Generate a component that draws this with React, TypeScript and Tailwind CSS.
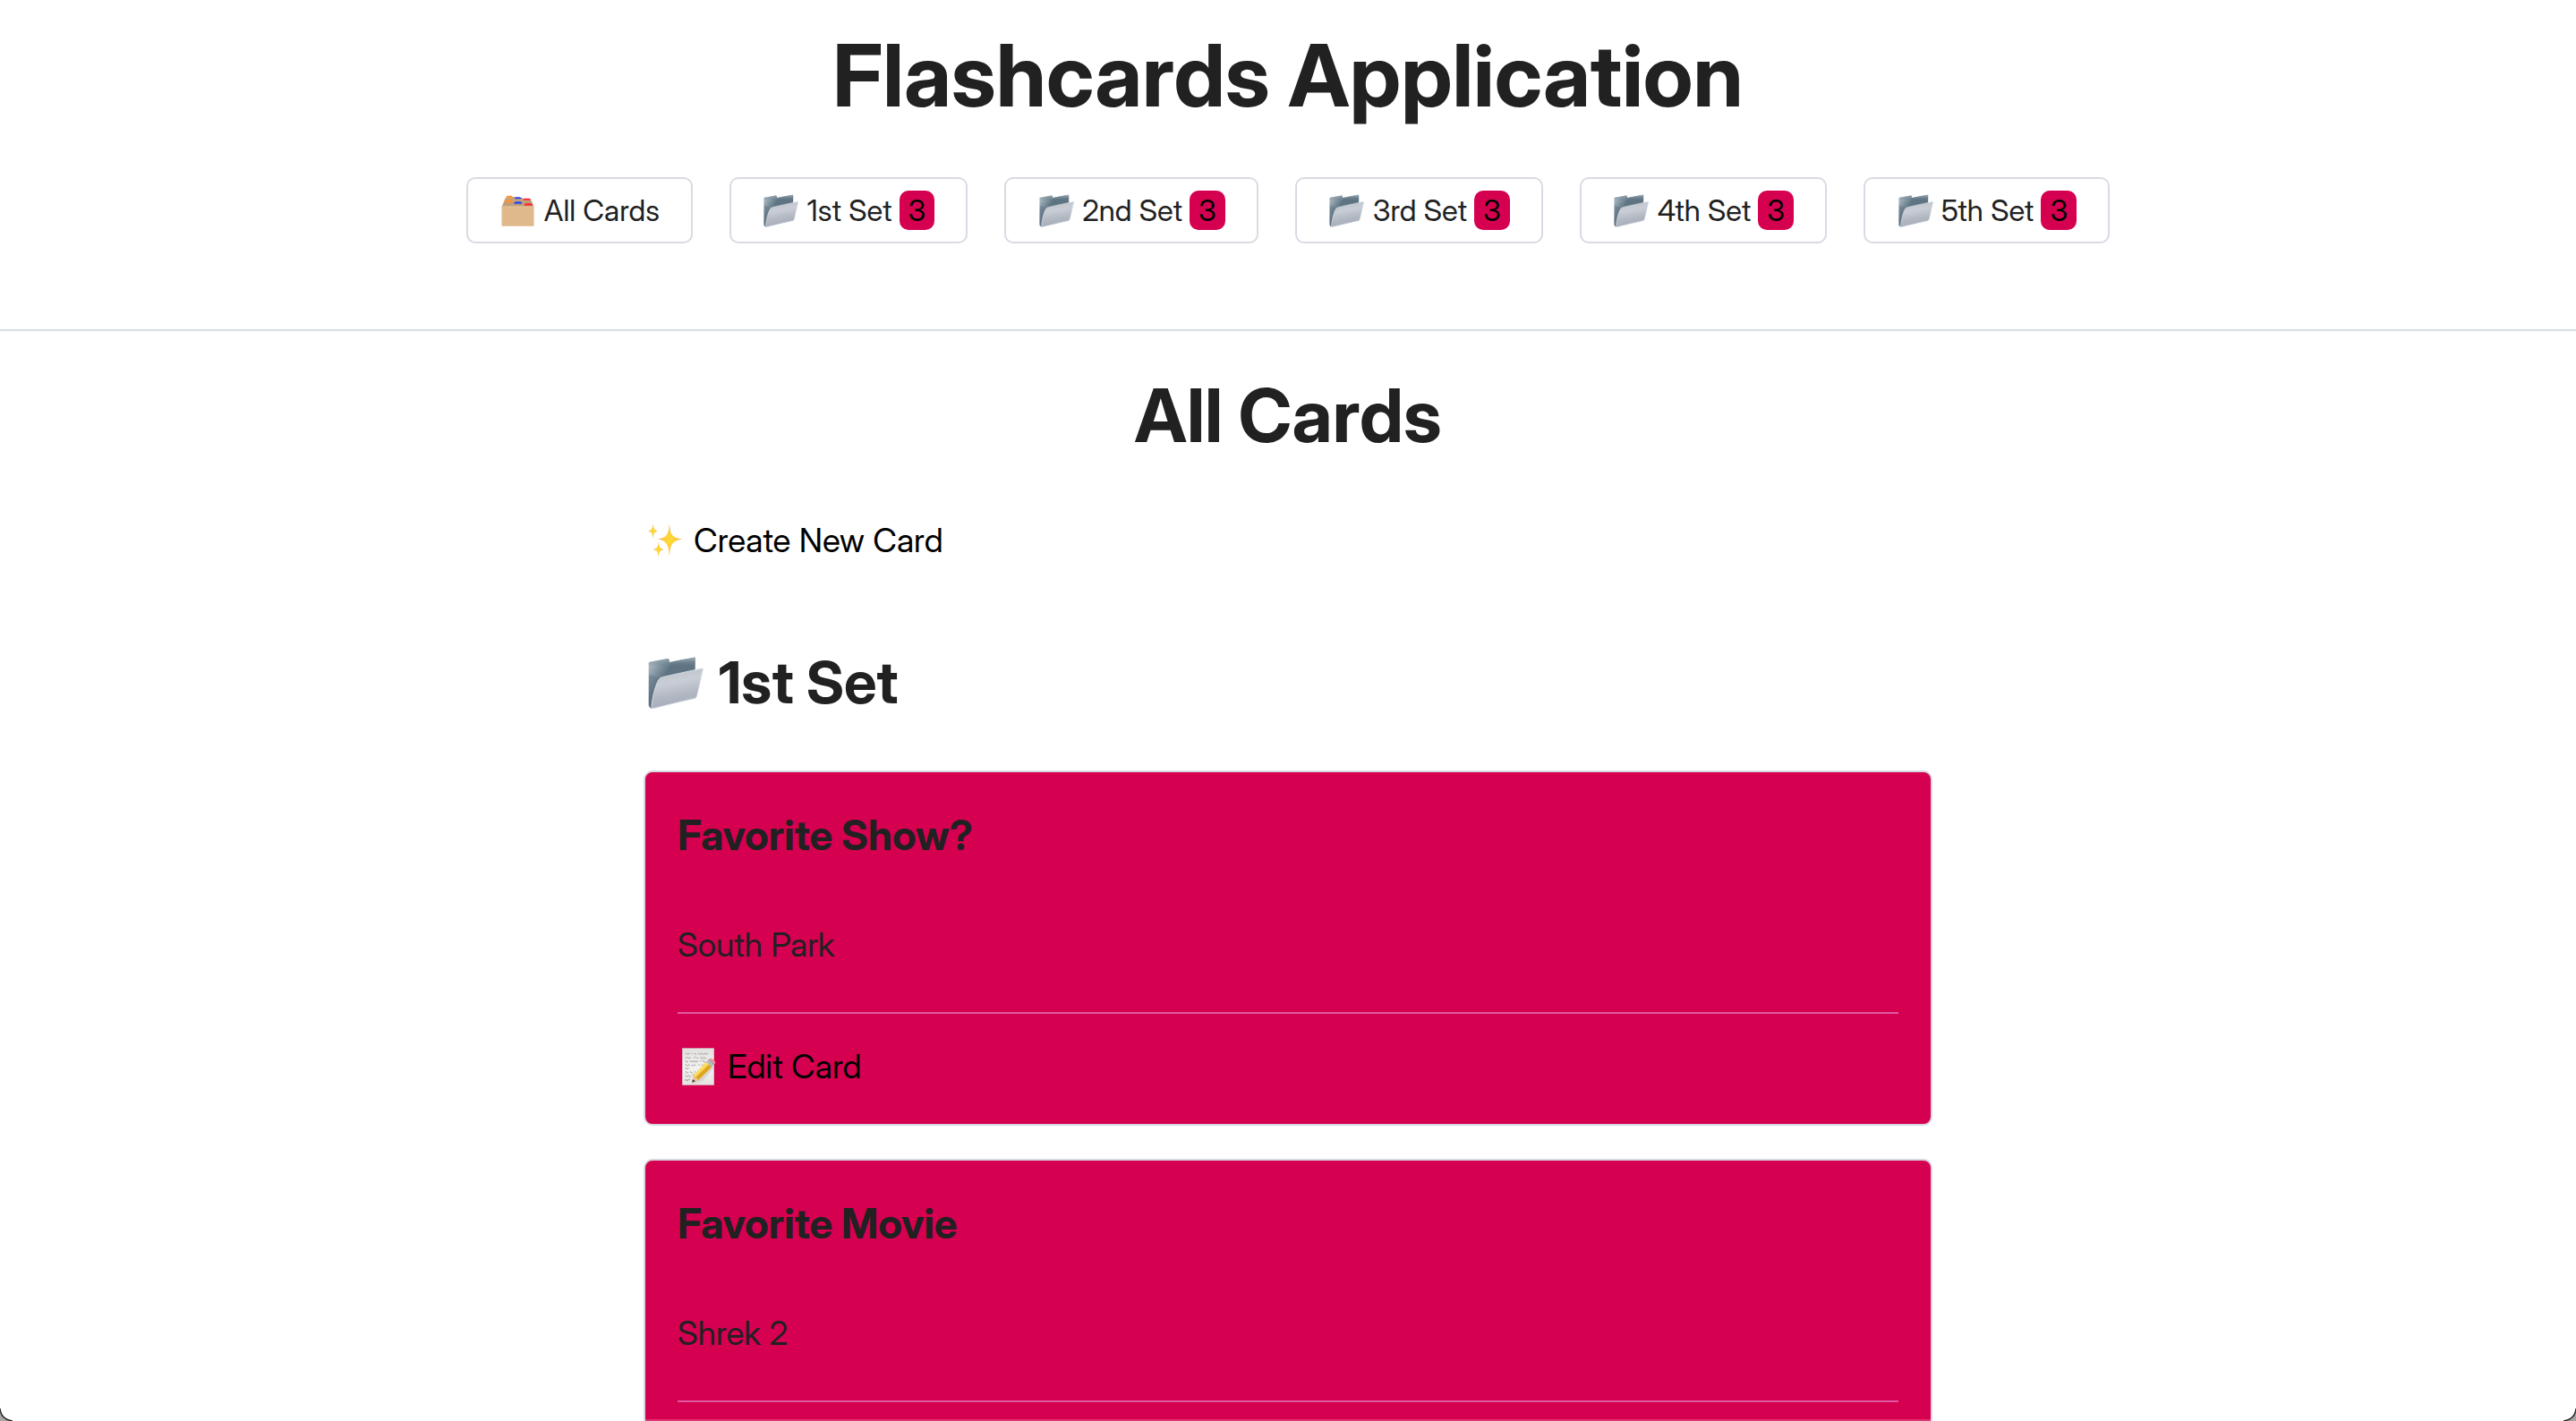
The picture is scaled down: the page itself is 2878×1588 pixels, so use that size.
import React, { useId } from "react";

type IconProps = { className?: string };

function FolderIcon({ className }: IconProps) {
  const id = useId();
  return (
    <svg viewBox="0 0 187 175" className={className} aria-hidden="true">
      <defs>
        <linearGradient id={id + "back"} x1="0" y1="0.1" x2="0.35" y2="0.35">
          <stop offset="0" stopColor="#b4c1ca" />
          <stop offset="0.5" stopColor="#8799a5" />
          <stop offset="1" stopColor="#5f7483" />
        </linearGradient>
        <linearGradient id={id + "top"} x1="0" y1="0" x2="0" y2="1">
          <stop offset="0" stopColor="#a9b7c0" />
          <stop offset="0.4" stopColor="#5f7483" stopOpacity="0" />
        </linearGradient>
        <linearGradient id={id + "front"} x1="0.3" y1="0" x2="0.55" y2="1">
          <stop offset="0" stopColor="#bcc2ca" />
          <stop offset="0.35" stopColor="#c9ced6" />
          <stop offset="0.65" stopColor="#b3b9c3" />
          <stop offset="1" stopColor="#a3aab6" />
        </linearGradient>
      </defs>
      <path d="M2 21 Q2 18 6 17 L66 6 Q70 6 71 10 L73 18 L154 2 Q159 1 159 5 L159 140 L12 174 Q2 170 2 162 Z" fill={"url(#" + id + "back)"} />
      <path d="M2 21 Q2 18 6 17 L66 6 Q70 6 71 10 L73 18 L154 2 Q159 1 159 5 L159 60 L2 80 Z" fill={"url(#" + id + "top)"} />
      <path d="M4 60 L40 72 L14 172 Q4 168 4 160 Z" fill="#5f7483" opacity="0.45" />
      <path d="M50 68 L181 39 Q187 38 185 44 L165 132 Q164 137 158 139 L18 174 Q10 175 12 165 C16 130 24 98 36 77 Q41 70 50 68 Z" fill={"url(#" + id + "front)"} stroke="#dde2e9" strokeWidth="2.5" />
    </svg>
  );
}

function CardBoxIcon({ className }: IconProps) {
  return (
    <svg viewBox="0 0 110 105" className={className} aria-hidden="true">
      <path d="M14 9 L40 5 L98 14 L109 39 L1 39 Z" fill="#c5a47c" />
      <path d="M10 24 H104 M6 31 H106" stroke="#b39369" strokeWidth="2" />
      <rect x="1" y="38" width="108" height="66" rx="2" fill="#dfb98b" />
      <path d="M2 39 H108" stroke="#e9caa2" strokeWidth="2" />
      <path d="M15 8 Q17 2 21 2 H32 Q36 2 37 8 Z M9 23 Q12 16 17 16 H33 Q37 16 38 23 Z" fill="#ff9130" />
      <path d="M44 13 Q46 7 50 7 H62 Q66 7 68 13 Z M42 29 Q44 22 48 22 H64 Q68 22 70 29 Z" fill="#2f45f2" />
      <path d="M73 17 Q75 11 79 11 H93 Q97 11 99 17 Z M76 35 Q78 28 82 28 H99 Q103 28 105 35 Z" fill="#ff2632" />
    </svg>
  );
}

function SparklesIcon({ className }: IconProps) {
  const id = useId();
  return (
    <svg viewBox="0 0 116 115" className={className} aria-hidden="true">
      <defs>
        <radialGradient id={id + "s"}>
          <stop offset="0" stopColor="#ffdc31" />
          <stop offset="0.5" stopColor="#fdcd3f" />
          <stop offset="1" stopColor="#f5a25e" />
        </radialGradient>
      </defs>
      <g fill={"url(#" + id + "s)"}>
        <path d="M73 2 C76 38 82 47 116 53 C82 59 76 72 73 112 C70 72 64 59 34 53 C64 47 70 38 73 2 Z" />
        <path d="M17 0 C19 17 22 22 34 25 C22 28 19 33 17 51 C15 33 12 28 0 25 C12 22 15 17 17 0 Z" />
        <path d="M36 63 C38 80 41 85 54 88 C41 91 38 96 36 115 C34 96 31 91 17 88 C31 85 34 80 36 63 Z" />
      </g>
    </svg>
  );
}

function MemoIcon({ className }: IconProps) {
  const id = useId();
  return (
    <svg viewBox="0 0 116 127" className={className} aria-hidden="true">
      <defs>
        <linearGradient id={id + "p"} x1="0" y1="0" x2="0" y2="1">
          <stop offset="0" stopColor="#e2e0de" />
          <stop offset="0.5" stopColor="#f3f2f0" />
          <stop offset="1" stopColor="#e6e4e1" />
        </linearGradient>
      </defs>
      <rect x="1" y="1" width="108" height="125" fill={"url(#" + id + "p)"} stroke="#cfc6c3" strokeWidth="1.5" />
      <g fill="none" stroke="#77777a" strokeWidth="2">
        <path d="M11 20 q3 -5 5 0 t5 0 t5 0 M32 20 l4 -2 M41 20 q2 -4 4 0 t4 0 M54 20 q2 -5 5 0 t5 0 t5 0 t5 0 t5 0 t5 0 t5 0" />
        <path d="M11 34 l4 -3 M17 34 q2 -5 4 0 t4 0 t4 0 M40 34 l5 -4 M47 34 q2 -4 4 0 t4 0 M62 34 q3 -6 5 0 t5 0 t5 0 t5 0" />
        <path d="M11 46 q3 -6 5 0 t5 0 M27 46 q2 -5 4 0 t4 0 t4 0 t4 0 t4 0 t4 0 t4 0 M62 46 l4 -4 M70 46 q3 -6 5 0 t5 0" />
        <path d="M11 59 q3 -6 5 0 t5 0 t5 0 M33 61 q2 -7 4 -2 t5 0 t5 0 M56 59 q2 -5 4 0 M66 59 q2 -5 5 0 t5 0" />
        <path d="M11 70 q2 -5 4 0 t4 0 t4 0" />
        <path d="M11 83 q3 -6 5 0 t5 0 M27 83 q2 -5 4 0 t4 0 M42 83 q2 -5 4 0" />
        <path d="M11 96 q2 -5 5 0 t5 0 t5 0 t5 0 M36 94 l4 -5" />
        <path d="M11 112 q3 -10 5 -3 t5 0 t5 0" />
      </g>
      <path d="M38 121 L70 112 L108 68 L92 50 L42 92 Z" fill="#8a8884" opacity="0.2" />
      <path d="M34 117 L39 93 Q52 96 56 109 Z" fill="#e8c38c" />
      <path d="M34 118 L36 107 Q43 109 45 114 Z" fill="#44433f" />
      <path d="M39 93 L82 48 L92 57 L47 100 Z" fill="#f7cf3c" />
      <path d="M47 100 L92 57 L101 65 L56 109 Q53 103 47 100 Z" fill="#e0a51c" />
      <path d="M44 95 L86 52" stroke="#fde67c" strokeWidth="4" />
      <path d="M82 48 L90 39 Q102 43 109 56 L101 65 Q94 52 82 48 Z" fill="#9daab4" />
      <path d="M85 44 Q98 48 105 60" stroke="#d5dde2" strokeWidth="3" fill="none" />
      <path d="M90 40 Q96 33 106 39 Q117 46 113 53 L109 58 Q103 44 90 40 Z" fill="#e8808b" />
      <path d="M94 39 Q104 40 111 51" stroke="#f3a9af" strokeWidth="3" fill="none" />
    </svg>
  );
}

const sets = [
  { name: "1st Set", count: 3 },
  { name: "2nd Set", count: 3 },
  { name: "3rd Set", count: 3 },
  { name: "4th Set", count: 3 },
  { name: "5th Set", count: 3 },
];

const cards = [
  { question: "Favorite Show?", answer: "South Park" },
  { question: "Favorite Movie", answer: "Shrek 2" },
];

const navButton =
  "flex h-[74px] items-center rounded-[10px] border-2 border-[#d8dbe3] bg-white px-[35px] text-[33px] leading-[44px] whitespace-nowrap";

function FlashCard({ question, answer }: { question: string; answer: string }) {
  return (
    <article className="rounded-[10px] border-2 border-[#d5d9e0] bg-[#d60051] px-9 py-[42px]">
      <h4 className="text-[46px] leading-[56px] font-bold">{question}</h4>
      <p className="mt-[73px] text-[37px] leading-[44px]">{answer}</p>
      <hr className="mt-[53px] border-t-2 border-[#de59a0]" />
      <button type="button" className="mt-[37px] flex items-center gap-2 text-[37px] leading-[44px] text-black">
        <span className="flex w-12 justify-center">
          <MemoIcon className="h-[42px] w-[38px]" />
        </span>
        Edit Card
      </button>
    </article>
  );
}

function WindowCorner({ className }: IconProps) {
  return (
    <svg viewBox="0 0 14 14" className={className} aria-hidden="true">
      <path d="M0 0 Q1 12 14 14 H0 Z" fill="#a9a5a5" />
      <path d="M0 0 Q1 12 14 14" fill="none" stroke="#2b2b2b" strokeWidth="1.5" />
    </svg>
  );
}

export default function App() {
  return (
    <div className="relative h-screen overflow-hidden bg-white font-['Inter_Display','Inter',sans-serif] text-[#212121]">
      <header className="border-b-2 border-[#d8dde2] px-8 pt-[34px] pb-24">
        <h1 className="text-center text-[96px] leading-[100px] font-bold">Flashcards Application</h1>
        <nav className="mt-16 flex flex-wrap justify-center gap-[41px]">
          <button type="button" className={navButton}>
            <span className="mr-2 flex w-[42px] justify-center">
              <CardBoxIcon className="h-[35px] w-[37px]" />
            </span>
            All Cards
          </button>
          {sets.map((set) => (
            <button key={set.name} type="button" className={navButton}>
              <span className="mr-2 flex w-[42px] justify-center">
                <FolderIcon className="h-[37px] w-[39px]" />
              </span>
              {set.name}
              <span className="ml-2 rounded-[10px] bg-[#d60051] px-2.5 text-black">{set.count}</span>
            </button>
          ))}
        </nav>
      </header>

      <main className="mx-auto max-w-[1440px] pt-[50px]">
        <h2 className="text-center text-[82px] leading-[90px] font-bold">All Cards</h2>
        <button type="button" className="mt-18 flex items-center gap-2 text-[37px] leading-[44px] text-black">
          <span className="flex w-12 justify-center">
            <SparklesIcon className="h-[38px] w-[38px]" />
          </span>
          Create New Card
        </button>
        <section className="mt-[99px]">
          <h3 className="flex items-center gap-3 text-[65px] leading-[76px] font-bold">
            <span className="flex w-[72px] justify-center">
              <FolderIcon className="h-[58px] w-[62px]" />
            </span>
            1st Set
          </h3>
          <div className="mt-[60px] flex flex-col gap-[37px]">
            {cards.map((card) => (
              <FlashCard key={card.question} question={card.question} answer={card.answer} />
            ))}
          </div>
        </section>
      </main>

      <div className="absolute inset-x-0 bottom-0 h-0.5 bg-white/20" />
      <WindowCorner className="absolute bottom-0 left-0 h-3.5 w-3.5" />
      <WindowCorner className="absolute right-0 bottom-0 h-3.5 w-3.5 -scale-x-100" />
    </div>
  );
}
